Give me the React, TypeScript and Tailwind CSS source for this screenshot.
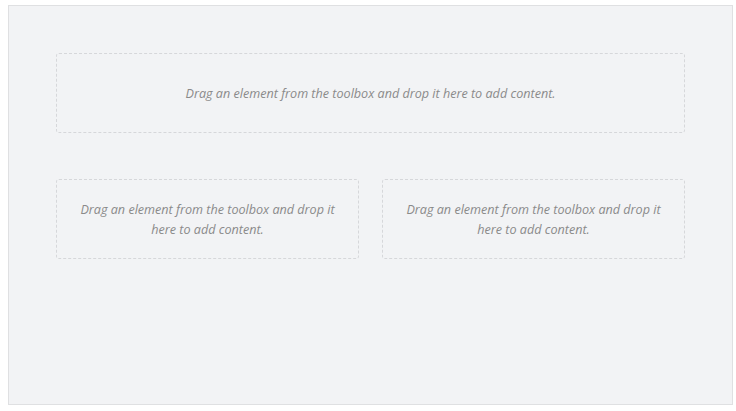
import React from 'react';

const DropZone: React.FC<{ className?: string }> = ({ className = '' }) => (
  <div
    className={`flex h-[80px] items-center justify-center rounded-[3px] border border-dashed border-[#d6d7da] px-6 pt-[2px] text-center text-[12.6px] leading-5 italic text-[#8a8a8a] ${className}`}
  >
    Drag an element from the toolbox and drop it here to add content.
  </div>
);

export default function App() {
  return (
    <div className="h-[411px] w-[736px] bg-white pl-[8px] pt-[5px] font-['Open_Sans',sans-serif]">
      <div className="flex h-[400px] w-[725px] flex-col gap-[46px] border border-[#dfe0e2] bg-[#f2f3f5] px-[47px] pt-[47px]">
        <DropZone />
        <div className="grid grid-cols-2 gap-[23px]">
          <DropZone className="px-[16px]" />
          <DropZone className="px-[16px]" />
        </div>
      </div>
    </div>
  );
}
